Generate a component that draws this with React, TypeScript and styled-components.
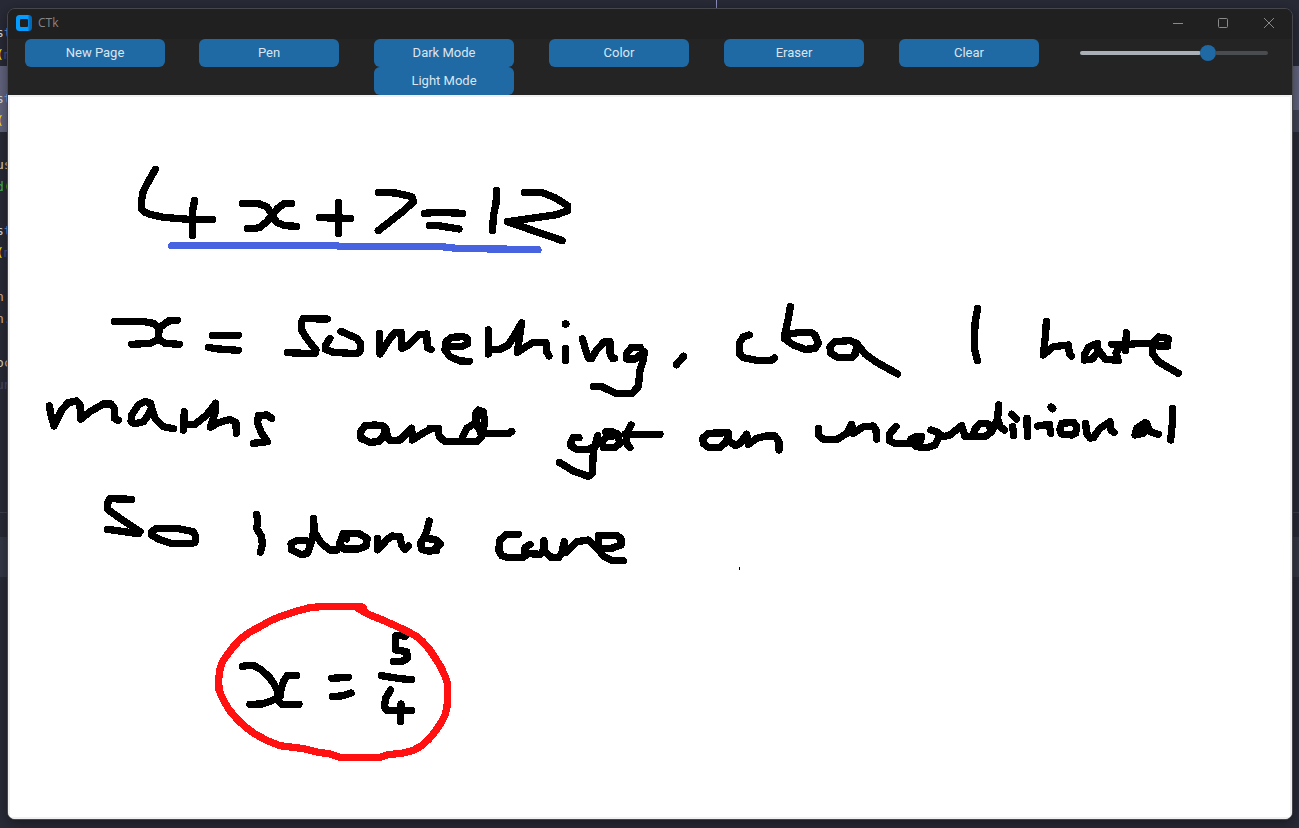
import React from 'react';
import styled, { createGlobalStyle } from 'styled-components';

const GlobalStyle = createGlobalStyle`
  body { margin: 0; background: #282a36; overflow: hidden; }
  * { box-sizing: border-box; }
`;

const Desktop = styled.div`
  position: relative;
  width: 1299px;
  height: 828px;
  overflow: hidden;
  background: #282a36;
`;

/* Code editor that shows around the edges of the window */
const Editor = styled.div`
  display: flex;
  flex-direction: column;
  height: 828px;
  font-family: 'DejaVu Sans Mono', monospace;
  font-size: 13px;
`;

const CodeLine = styled.div<{ $bg?: string }>`
  display: flex;
  flex: none;
  height: 22px;
  margin-left: -4px;
  line-height: 22px;
  white-space: pre;
  background: ${(p) => p.$bg ?? 'transparent'};
`;

const Token = styled.span<{ $color: string }>`
  color: ${(p) => p.$color};
`;

const PaneTop = styled.div`
  flex: none;
  height: 25px;
  margin-top: 72px;
  border-top: 1px solid #3d3f4c;
`;

const PaneTab = styled.div`
  flex: none;
  height: 40px;
  background: #343746;
`;

const Caret = styled.div`
  position: absolute;
  left: 716px;
  top: 0;
  width: 1px;
  height: 8px;
  background: #8d90c0;
`;

const AppWindow = styled.div`
  position: absolute;
  left: 7px;
  top: 8px;
  width: 1286px;
  height: 812px;
  display: flex;
  flex-direction: column;
  overflow: hidden;
  border: 1px solid #46474d;
  border-radius: 8px;
  background: #242424;
  box-shadow: 0 3px 14px rgba(0, 0, 0, 0.42);
`;

const TitleBar = styled.header`
  display: flex;
  align-items: center;
  flex: none;
  height: 30px;
  padding: 0 0 2px 8px;
  background: #202020;
`;

const Title = styled.span`
  flex: 1;
  margin-left: 6px;
  font: 12px/28px 'Open Sans', sans-serif;
  color: #868686;
`;

const Controls = styled.div`
  display: flex;
`;

const WindowButton = styled.button<{ $width: number }>`
  display: flex;
  align-items: center;
  justify-content: center;
  width: ${(p) => p.$width}px;
  height: 28px;
  padding: 0;
  border: 0;
  background: none;
`;

const Toolbar = styled.nav`
  display: grid;
  grid-template-columns: 174px repeat(5, 175px) 200px;
  align-items: start;
  flex: none;
  height: 56px;
  padding-left: 17px;
  background: #242424;
`;

const ButtonStack = styled.div`
  display: flex;
  flex-direction: column;
`;

const ToolButton = styled.button`
  width: 140px;
  height: 28px;
  padding: 0 0 1px;
  border: 0;
  border-radius: 6px;
  background: #1f6aa5;
  color: #dce4ee;
  font: 13px Roboto, sans-serif;
`;

const Slider = styled.div`
  display: flex;
  align-items: center;
  height: 28px;
  padding: 0 6px;
`;

const Track = styled.div<{ $width: number; $color: string }>`
  width: ${(p) => p.$width}px;
  height: 4px;
  border-radius: 2px;
  background: ${(p) => p.$color};
`;

const Knob = styled.div`
  width: 16px;
  height: 16px;
  margin: 0 -1px;
  border-radius: 50%;
  background: #1f6aa5;
`;

const Page = styled.main`
  flex: 1;
  border: 2px solid #f0f0f0;
  background: #fff;
`;

const Ink = styled.svg`
  display: block;
  fill: none;
  stroke: #000;
  stroke-width: 22;
  stroke-linecap: round;
  stroke-linejoin: round;
`;

const PenTip = styled.line`
  stroke-width: 1;
  stroke-linecap: butt;
`;

type Drawing = { x: number; y: number; color?: string; strokes: string[] };

/* Pen strokes, each group relative to its own origin, three units per pixel */
const drawings: Drawing[] = [
  {
    x: 110, y: 150,
    strokes: [
      '136,58 115,95 99,127 95,150 95,178 105,187 120,193 160,202 248,209 308,209',
      '254,151 248,180 248,257',
      '397,160 443,160 470,170 487,195 500,217 525,227 560,229',
      '545,160 522,161 503,175 487,195 470,215 450,232 433,236 412,236',
      '628,203 722,205', '685,157 685,251',
      '805,127 858,129 905,140 911,155 880,183 805,242',
      '943,190 985,187 1058,190', '958,226 985,227 1047,237',
      '1160,121 1158,160 1151,195 1147,242',
      '1243,127 1295,127 1335,143 1373,167 1373,182 1340,194 1192,215 1357,272',
    ],
  },
  {
    x: 110, y: 150, color: '#4763e0',
    strokes: ['185,287 683,287 685,289 995,290 1040,295 1160,297 1284,299'],
  },
  {
    x: 100, y: 290,
    strokes: [
      '43,94 128,94 160,100 177,115 176,148 195,160 238,163',
      '232,91 205,93 177,115 176,148 150,160 95,163',
      '337,136 415,136', '326,172 345,176 415,181',
      '682,87 610,86 605,95 605,120 620,145 648,180 645,191 562,188',
      '723,124 770,145 782,160 780,185 768,191 700,187 676,178 677,165 690,145',
      '839,130 840,192 870,145 885,128 903,127 905,175 925,165 955,135 980,132 982,172 993,179',
      '1040,169 1085,170 1102,162 1102,145 1090,140 1055,142 1038,155 1035,180 1050,200 1080,213 1108,214',
    ],
  },
  {
    x: 450, y: 290,
    strokes: [
      '115,120 115,192',
      '115,180 150,178 175,165 200,125 215,98 210,130 202,187 225,172 250,157 288,158 290,185 297,198',
      '346,175 346,212', '346,102 348,102',
      '397,147 415,205 425,205 440,180 463,155 480,155 480,190 488,206 493,205',
      '570,172 545,172 530,190 530,207 555,207 583,185 580,210 570,240 565,290 545,311 500,311 455,290 430,289',
      '679,224 701,199',
      '898,135 880,140 868,160 868,190 880,203 920,211 965,211 973,204',
      '1021,50 1015,85 1003,140 1003,145 1030,165 1065,178 1095,176 1105,160 1095,135 1085,128 1050,127 1020,132 1003,145',
    ],
  },
  {
    x: 810, y: 290,
    strokes: [
      '140,160 120,152 75,155 60,170 62,190 85,203 125,203 137,190 140,165',
      '140,160 165,192 200,217 263,252',
      '503,55 495,100 493,175 502,212',
      '709,94 707,130 700,195 730,170 775,165 778,190 785,198',
      '862,160 835,172 823,195 823,210 845,208 862,190 862,160',
      '862,175 885,207 925,212', '930,168 918,190 925,212',
      '949,128 947,182', '905,163 945,165 985,160 1020,160',
      '1030,162 1045,168 1073,168 1074,145 1045,141 1028,158 1027,190 1045,215 1105,250',
      '26,415 25,435 40,448 80,449 110,430 125,403 130,430 160,410 190,408 198,420 200,447',
      '258,410 240,430 238,452 255,461 300,460 302,448 318,440 335,440 332,452 315,458 318,470 350,473 375,465 388,440 385,428 363,420',
      '388,432 400,440 420,435 455,407 465,440 490,440 525,440 545,425 535,402 510,400 493,420 490,440',
      '566,345 563,385 545,425', '563,385 570,410 583,420',
      '605,373 620,387', '608,410 611,437', '651,385 652,440',
      '683,408 718,403 722,430', '723,351 728,356',
      '750,420 755,400 790,397 800,410 797,430 785,435 755,432 750,420',
      '827,400 830,430 840,444 850,443 870,415 900,395 903,420 912,428',
      '1005,398 980,415 975,435 1000,430 1010,400 1020,425 1045,433',
      '1087,355 1087,400 1082,450',
    ],
  },
  {
    x: 30, y: 390,
    strokes: [
      '58,48 63,75 72,108 95,60 115,38 140,33 150,45 152,88 180,65 220,42 243,42 253,55 253,85 265,91',
      '365,60 362,40 345,34 325,45 305,75 303,95 315,101 340,95 355,75 365,55 375,85 400,110 430,116',
      '463,65 460,120',
      '463,105 495,103 530,75 557,40 555,70 545,100 541,112 565,98 600,88 618,98 619,130',
      '725,85 710,75 685,77 683,100 695,130 712,155 670,160',
      '1068,120 1060,108 1035,105 1005,107 992,125 993,145 1020,157 1045,155 1060,140 1068,115 1072,140 1080,152 1110,150 1145,115 1147,150 1170,135 1205,115 1225,115',
      '305,328 240,326 233,340 233,358 260,378 330,425 325,431 232,418',
      '365,425 380,415 440,415 490,425 497,440 495,458 480,461 425,461 385,447 365,435 365,425',
      '680,373 683,395 680,415 695,440 697,465 691,487',
      '840,460 830,452 800,452 783,460 785,480 815,494 832,490 843,460 852,420 850,385 855,430 875,460 900,480 920,480',
      '928,465 940,430 985,430 1012,445 1008,468 985,477 940,477 928,460', '945,445 950,447',
      '1042,445 1043,480 1070,450 1085,438 1110,440 1115,465 1125,478 1135,468',
      '1198,393 1190,425 1172,460 1175,478 1195,483 1220,482',
      '1180,445 1215,448 1232,462 1218,472',
    ],
  },
  {
    x: 430, y: 390,
    strokes: [
      '0,115 22,115 28,140 45,155 140,155 155,140 150,120 138,105 138,70 145,60 160,65 163,90 160,131 235,131 245,124',
      '98,155 98,140 110,115 130,103',
      '447,143 430,143 423,155 423,168 440,178 475,178 500,165 503,137 490,185 487,250 475,259 430,243 388,217',
      '545,140 530,140 517,155 520,172 555,172 570,160 562,132 545,124 527,125',
      '603,105 590,130 590,160 600,173', '585,133 690,133',
      '895,128 835,130 818,145 820,160 835,172 870,172 890,155 895,128 895,150 915,167 930,160 950,133 955,163 980,145 1010,138 1035,138 1047,155 1047,180',
      '265,433 230,433 210,450 206,480 215,497 235,503 280,502 292,492',
      '300,463 285,473 285,490 330,493 342,480 342,452 345,485 365,503 385,503 395,490 403,455 407,488 440,455 475,450 500,475',
      '505,478 545,475 573,465 573,445 560,437 505,437 505,478 520,498 545,511 580,512',
    ],
  },
  {
    x: 200, y: 590,
    strokes: [
      '127,229 145,226 160,226 185,240 208,262 224,285 233,305 236,332 245,343 297,343',
      '290,256 262,257 250,275 243,300 240,320 215,332 185,342 150,343',
      '395,265 445,262', '397,320 430,317 453,309',
      '615,140 600,135 587,137 587,180 620,185 622,205 610,213 580,215',
      '544,257 600,266 635,269',
      '572,300 557,325 553,350 560,361 635,361', '603,342 602,395',
    ],
  },
  {
    x: 200, y: 590, color: '#ff1111',
    strokes: [
      '475,52 490,52 484,50 360,50 325,54 285,65 240,80 210,93 180,110 150,126 123,146 100,170 82,194 66,218 59,242 56,268 57,300 70,330 88,360 112,388 135,410 165,432 200,451 240,467 310,476 350,486 390,492 420,502 540,502 560,495 610,489 640,481 665,467 687,447 705,425 722,400 735,375 741,350 743,320 743,282 735,258 722,230 705,203 688,178 668,155 648,138 620,123 590,109 550,91 510,75 475,56',
    ],
  },
];

type Line = { bg?: string; tokens?: [string, string][] };

const white = '#d8d8d2';
const lines: Line[] = [
  {},
  { tokens: [['s', white], ['t', '#5c9edb']] },
  { tokens: [['(', '#fff000'], ['m', '#4d5488']] },
  { bg: '#62657f' },
  { bg: '#62657f', tokens: [['s', white], ['t', '#79b4e8']] },
  { bg: 'linear-gradient(90deg, #62657f 50%, #414458 50%)', tokens: [['(', '#fff000']] },
  {},
  { tokens: [['u', white], ['s', '#e0b080']] },
  { tokens: [['d', '#42b558'], ['(', '#8fd020']] },
  {},
  { tokens: [['s', white], ['t', '#5c9edb']] },
  { tokens: [['(', '#fff000'], ['m', '#4d5488']] },
  {},
  { tokens: [['n', '#d8b48c']] },
  { tokens: [['n', '#d8b48c'], ['.', '#8fa5cc']] },
  {},
  { tokens: [['o', white], ['c', '#d8b48c']] },
  { tokens: [['u', '#454a78'], ['n', '#454a78']] },
  {},
  {},
];

const Logo = () => (
  <svg width="16" height="16" viewBox="0 0 16 16">
    <defs>
      <linearGradient id="logo-side" x1="0" x2="1">
        <stop offset="0.72" stopColor="#059cff" />
        <stop offset="0.86" stopColor="#0069b8" />
      </linearGradient>
    </defs>
    <rect width="16" height="16" rx="3.5" fill="url(#logo-side)" />
    <rect x="4" y="4" width="8" height="8" rx="1" fill="#202020" />
  </svg>
);

const glyphs = [
  { name: 'Minimize', width: 44, d: 'M0 5.5H10' },
  { name: 'Maximize', width: 46, d: 'M.5 1.5Q.5 .5 1.5 .5H8.5Q9.5 .5 9.5 1.5V8.5Q9.5 9.5 8.5 9.5H1.5Q.5 9.5 .5 8.5Z' },
  { name: 'Close', width: 46, d: 'M0 0L10 10M10 0L0 10' },
];

const tools = [['New Page'], ['Pen'], ['Dark Mode', 'Light Mode'], ['Color'], ['Eraser'], ['Clear']];

export default function App() {
  return (
    <Desktop>
      <GlobalStyle />
      <Editor>
        {lines.map((line, i) => (
          <CodeLine key={i} $bg={line.bg}>
            {line.tokens?.map(([text, color], j) => (
              <Token key={j} $color={color}>{text}</Token>
            ))}
          </CodeLine>
        ))}
        <PaneTop />
        <PaneTab />
      </Editor>
      <Caret />
      <AppWindow>
        <TitleBar>
          <Logo />
          <Title>CTk</Title>
          <Controls>
            {glyphs.map((g) => (
              <WindowButton key={g.name} $width={g.width} aria-label={g.name}>
                <svg width="10" height="10" viewBox="0 0 10 10" fill="none" stroke="#8a8a8a">
                  <path d={g.d} />
                </svg>
              </WindowButton>
            ))}
          </Controls>
        </TitleBar>
        <Toolbar>
          {tools.map((labels) => (
            <ButtonStack key={labels[0]}>
              {labels.map((label) => (
                <ToolButton key={label}>{label}</ToolButton>
              ))}
            </ButtonStack>
          ))}
          <Slider>
            <Track $width={121} $color="#aab0b5" />
            <Knob />
            <Track $width={53} $color="#4a4d50" />
          </Slider>
        </Toolbar>
        <Page>
          <Ink width="1280" height="720" viewBox="10 97 1280 720" shapeRendering="crispEdges">
            {drawings.map((d, i) => (
              <g key={i} transform={`translate(${d.x} ${d.y}) scale(${1 / 3})`} stroke={d.color}>
                {d.strokes.map((points) => (
                  <polyline key={points} points={points} />
                ))}
              </g>
            ))}
            <PenTip x1="739.5" y1="567" x2="739.5" y2="570" />
          </Ink>
        </Page>
      </AppWindow>
    </Desktop>
  );
}
